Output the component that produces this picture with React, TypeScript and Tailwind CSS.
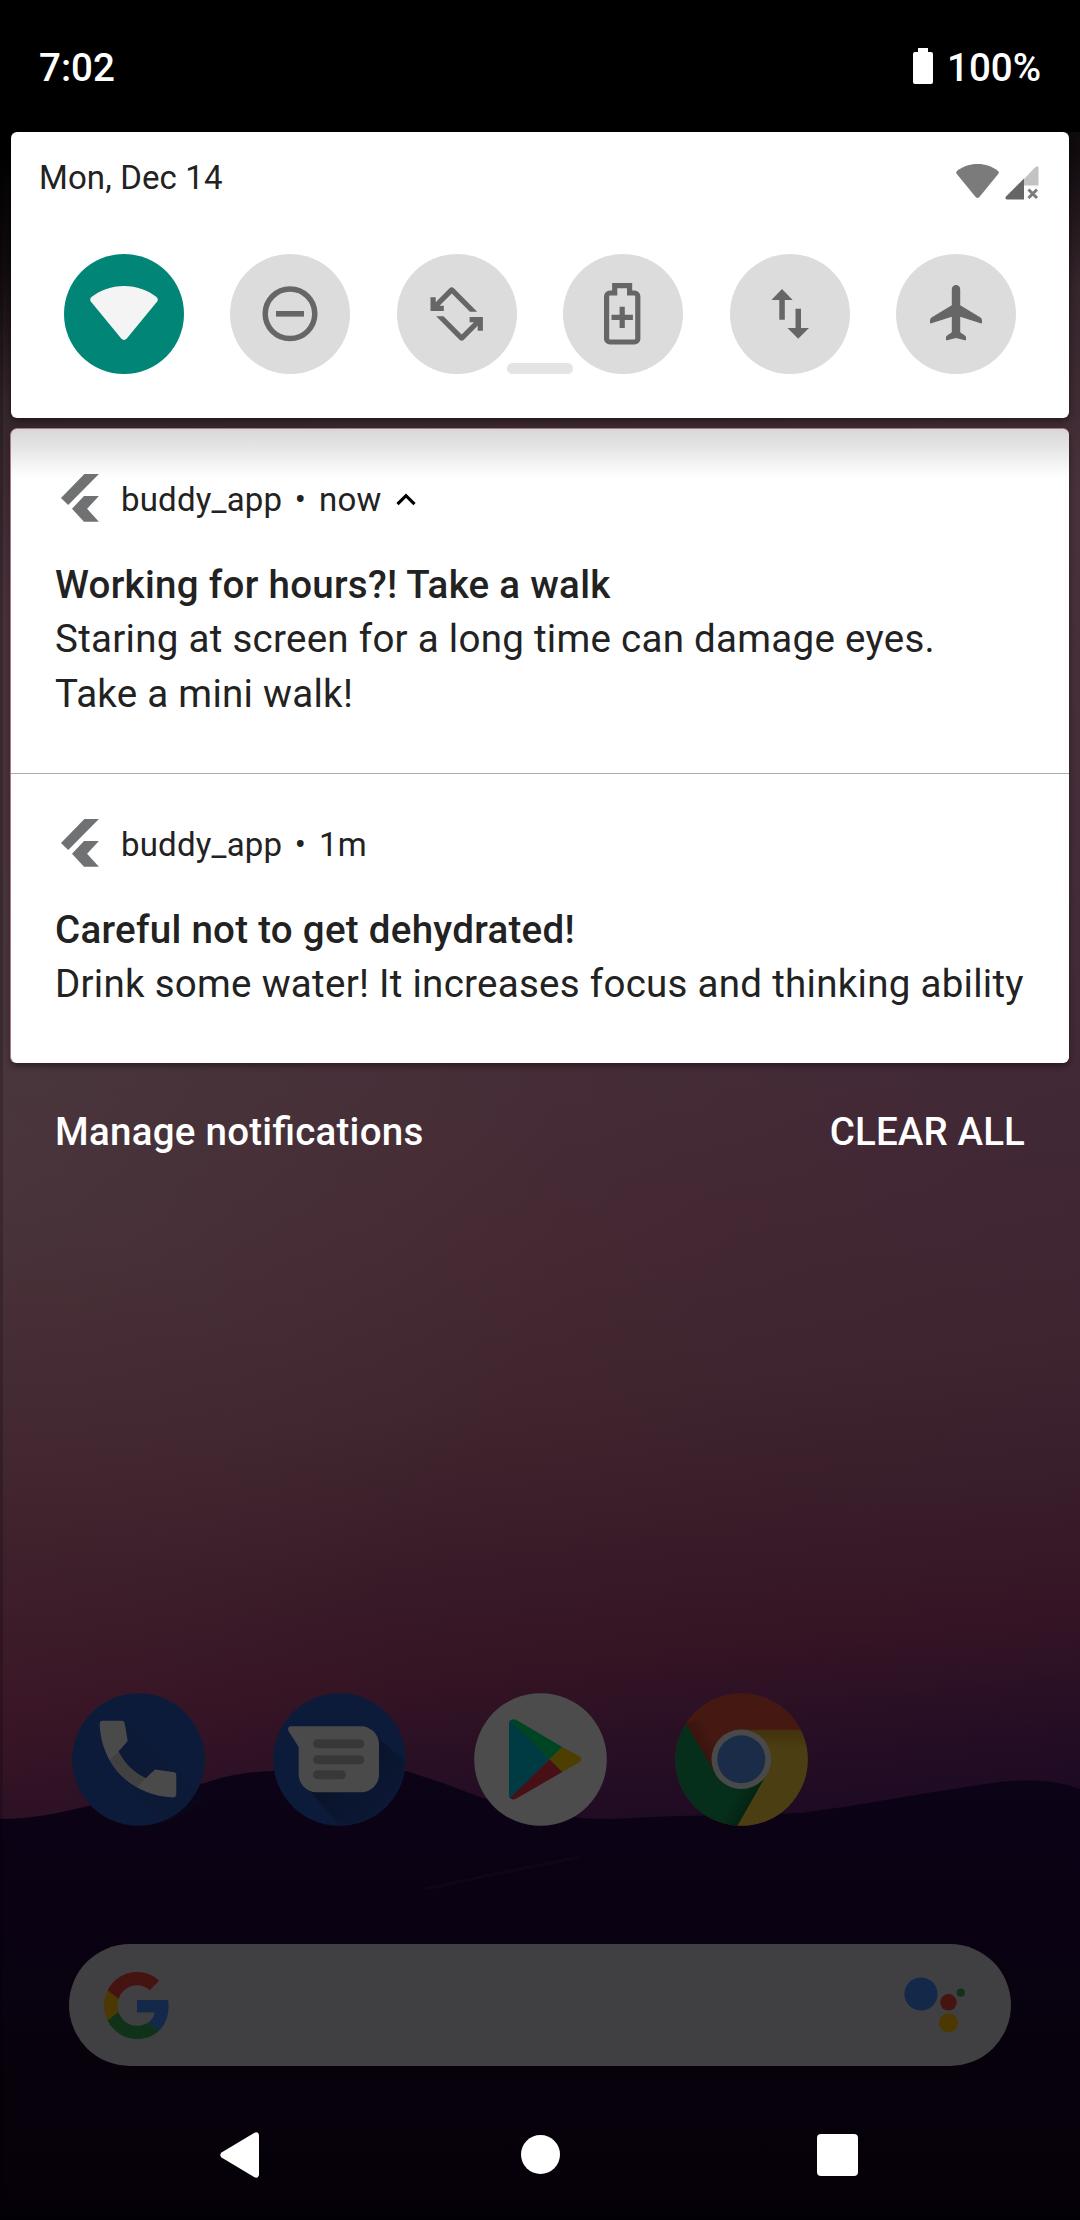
import React from "react";

type Note = { time: string; title: string; lines: string[]; expanded?: boolean };

const notes: Note[] = [
  {
    time: "now",
    title: "Working for hours?! Take a walk",
    lines: ["Staring at screen for a long time can damage eyes.", "Take a mini walk!"],
    expanded: true,
  },
  {
    time: "1m",
    title: "Careful not to get dehydrated!",
    lines: ["Drink some water! It increases focus and thinking ability"],
  },
];

function Wallpaper() {
  return (
    <svg className="absolute inset-0" width="1080" height="2220" viewBox="0 0 1080 2220" aria-hidden="true">
      <defs>
        <linearGradient id="sky" gradientUnits="userSpaceOnUse" x1="420" y1="0" x2="620" y2="1860">
          <stop offset="0.05" stopColor="#000000" />
          <stop offset="0.12" stopColor="#120c0f" />
          <stop offset="0.19" stopColor="#35262c" />
          <stop offset="0.3" stopColor="#48313a" />
          <stop offset="0.55" stopColor="#462e38" />
          <stop offset="0.66" stopColor="#452933" />
          <stop offset="0.75" stopColor="#40252e" />
          <stop offset="0.82" stopColor="#391d29" />
          <stop offset="0.89" stopColor="#351424" />
          <stop offset="0.93" stopColor="#2b1024" />
          <stop offset="0.97" stopColor="#210c24" />
          <stop offset="1" stopColor="#1b0921" />
        </linearGradient>
        <radialGradient id="warm" gradientUnits="userSpaceOnUse" cx="0" cy="1170" r="560">
          <stop offset="0" stopColor="#524c48" stopOpacity="0.27" />
          <stop offset="1" stopColor="#524c48" stopOpacity="0" />
        </radialGradient>
        <radialGradient id="ember" gradientUnits="userSpaceOnUse" cx="0" cy="1640" r="420">
          <stop offset="0" stopColor="#451a2a" stopOpacity="0.3" />
          <stop offset="1" stopColor="#451a2a" stopOpacity="0" />
        </radialGradient>
        <radialGradient id="cool" gradientUnits="userSpaceOnUse" cx="1080" cy="1130" r="600">
          <stop offset="0" stopColor="#352236" stopOpacity="0.3" />
          <stop offset="1" stopColor="#352236" stopOpacity="0" />
        </radialGradient>
        <linearGradient id="ground" x1="0" y1="0" x2="0" y2="1">
          <stop offset="0" stopColor="#0c0316" />
          <stop offset="0.35" stopColor="#0a0213" />
          <stop offset="0.7" stopColor="#07010b" />
          <stop offset="1" stopColor="#050008" />
        </linearGradient>
      </defs>
      <rect width="1080" height="2220" fill="url(#sky)" />
      <rect y="600" width="1080" height="1200" fill="url(#warm)" />
      <rect y="1200" width="1080" height="650" fill="url(#ember)" />
      <rect y="500" width="1080" height="1300" fill="url(#cool)" />
      <path
        d="M0 1819C30 1819 60 1813 88 1806C130 1796 170 1789 205 1783C225 1776 245 1772 273 1771C310 1764 370 1760 406 1771L440 1782L483 1798C530 1812 570 1819 610 1819C680 1815 740 1815 800 1813C870 1804 920 1793 1000 1782C1030 1779 1056 1780 1080 1789V2220H0Z"
        fill="url(#ground)"
      />
      <path d="M425 1889L500 1873L580 1857" stroke="#1a0f20" strokeWidth="3" opacity="0.35" fill="none" />
      <rect width="3" height="2220" fill="#000" opacity="0.2" />
      <rect y="2217" width="1080" height="3" fill="#000" opacity="0.5" />
    </svg>
  );
}

function StatusBar() {
  return (
    <header className="flex h-[132px] items-center justify-between bg-black pr-[39px] pl-[39px] text-[38.5px] leading-[54px] font-medium text-white">
      <span className="pt-[3px]">7:02</span>
      <span className="flex items-center">
        <svg width="20" height="36" viewBox="0 0 20 36" className="mr-[14px]">
          <path d="M5 0h10v4h3a2 2 0 0 1 2 2v28a2 2 0 0 1-2 2H2a2 2 0 0 1-2-2V6a2 2 0 0 1 2-2h3z" fill="#fff" />
        </svg>
        <span className="pt-[3px]">100%</span>
      </span>
    </header>
  );
}

function WifiFan({ width, height, color }: { width: number; height: number; color: string }) {
  return (
    <svg width={width} height={height} viewBox="0 0 68 54">
      <path d="M34 0C47 0 57 4 66.500 11Q68.800 13 67.200 15.500L37 52.300Q34 55.600 31 52.300L.8 15.500Q-.8 13 1.500 11C11 4 21 0 34 0Z" fill={color} />
    </svg>
  );
}

function Signal() {
  return (
    <svg width="34" height="34" viewBox="0 0 34 34">
      <path d="M19 13L30.500 1Q33.500 -1 33.500 2V19.500H19Z" fill="#c3c3c3" />
      <path d="M19 12.500V33.500H2Q-.5 33 1 30.500Z" fill="#666" />
      <path d="M23.500 23.500L32 32M32 23.500L23.500 32" stroke="#7c7c7c" strokeWidth="3" />
    </svg>
  );
}

const rotateHalf = "M34 43.300h5.200v5L53 34.300q2.200-2 4.400 0L80.700 57.700H73.400L55.300 39.400 43 51.700h4.300V57H34z";

const tileIcons: React.ReactNode[] = [
  <g key="wifi" transform="translate(26 32)">
    <path d="M34 0C47 0 57 4 66.500 11Q68.800 13 67.200 15.500L37 52.300Q34 55.600 31 52.300L.8 15.500Q-.8 13 1.500 11C11 4 21 0 34 0Z" fill="#f4f4f4" />
  </g>,
  <g key="dnd">
    <circle cx="60" cy="59.800" r="24.800" fill="none" stroke="#666" strokeWidth="5.500" />
    <rect x="46" y="57" width="28" height="5.600" fill="#666" />
  </g>,
  <g key="rotate" fill="#666" transform="translate(-0.5 0)">
    <path d={rotateHalf} />
    <path d={rotateHalf} transform="rotate(180 60.200 60)" />
  </g>,
  <g key="battery" fill="none" stroke="#666" strokeWidth="5.200">
    <path d="M51.700 31.700H66.600V39H71.500a3.300 3.300 0 0 1 3.300 3.300V84.700a3.300 3.300 0 0 1-3.300 3.300H46.900a3.300 3.300 0 0 1-3.300-3.300V42.300a3.300 3.300 0 0 1 3.300-3.300H51.700Z" />
    <path d="M59.200 52.700V74M48.500 63.300H69.900" />
  </g>,
  <g key="data" fill="#666">
    <path d="M52 35L62.700 46H54.800V65.700H49.300V46H41.400Z" />
    <path d="M68.200 84.700L57.500 74H65.500V54.700H71V74H79Z" />
  </g>,
  <path
    key="plane"
    d="M60 31a4.200 4.200 0 0 1 4.200 4.200V51.300L84.500 63.500Q86 64.500 86 66.500V68.500Q86 69.800 84.600 69.300L64.200 62.800V78.300L69.200 81.800Q70 82.500 70 83.700V85.500Q70 86.600 68.800 86.300L60 83.900 51.200 86.300Q50 86.600 50 85.500V83.700Q50 82.500 50.800 81.800L55.800 78.300V62.800L35.400 69.300Q34 69.800 34 68.500V66.500Q34 64.500 35.500 63.500L55.800 51.300V35.200A4.200 4.200 0 0 1 60 31Z"
    fill="#666"
  />,
];

function QuickSettings() {
  return (
    <section className="relative mx-[11px] flex h-[286px] flex-col rounded-[6px] bg-white shadow-[0_3px_8px_rgba(0,0,0,0.45)]">
      <div className="flex h-[92px] items-center justify-between pr-[30px] pl-[28px]">
        <span className="text-[33px] leading-[44px] tracking-[0.12px] text-[#222]">Mon, Dec 14</span>
        <span className="flex items-end gap-[6px] pt-[8px]">
          <span className="pb-[2px]">
            <WifiFan width={43} height={34} color="#7b7b7b" />
          </span>
          <Signal />
        </span>
      </div>
      <div className="flex justify-between px-[53px] pt-[30px]">
        {tileIcons.map((icon, i) => (
          <div key={i} className={i === 0 ? "size-[120px] rounded-full bg-[#018577]" : "size-[120px] rounded-full bg-[#dcdcdc]"}>
            <svg width="120" height="120" viewBox="0 0 120 120">
              {icon}
            </svg>
          </div>
        ))}
      </div>
      <div className="absolute top-[231px] left-[496px] h-[11px] w-[66px] rounded-full bg-[#e4e4e4]" />
    </section>
  );
}

function FlutterMark() {
  return (
    <svg width="38" height="48" viewBox="0 0 38 48" fill="#6f7173">
      <path d="M23.400 0H37.900L7.200 31 0 24Z" />
      <path d="M23 22H37.900L26.100 34.700 37.900 47.800H23L11 34.700Z" />
    </svg>
  );
}

function NoteRow({ note }: { note: Note }) {
  return (
    <article className="px-[44px] pt-[45px] text-[#222]">
      <div className="flex h-[48px] items-center pl-[6px] text-[33px] leading-[44px] tracking-[0.2px]">
        <FlutterMark />
        <span className="ml-[22px] pt-[3px]">buddy_app</span>
        <span className="mr-[13px] ml-[12.5px] pt-[3px]">•</span>
        <span className="pt-[3px]">{note.time}</span>
        {note.expanded && (
          <svg width="20" height="13" viewBox="0 0 20 13" className="mt-[2px] ml-[14px]">
            <path d="M1.500 11.200L10 2.700 18.500 11.200" fill="none" stroke="#000" strokeWidth="3.200" />
          </svg>
        )}
      </div>
      <h2 className="mt-[36px] h-[53px] text-[38.5px] leading-[54px] font-medium tracking-[0.28px] whitespace-nowrap">{note.title}</h2>
      {note.lines.map((line) => (
        <p key={line} className="text-[38.5px] leading-[55px] tracking-[0.28px] whitespace-nowrap">
          {line}
        </p>
      ))}
    </article>
  );
}

function Notifications() {
  return (
    <section className="mx-[11px] mt-[11px] h-[634px] rounded-[6px] bg-white bg-[linear-gradient(to_bottom,#d8d8d8_0px,#e6e6e6_20px,#f8f8f8_40px,#ffffff_50px)] shadow-[0_-1px_0_#b0788c,-1px_0_0_#b0788c,0_3px_6px_rgba(0,0,0,0.4)]">
      <div className="h-[345px] border-b border-[#a9abad]">
        <NoteRow note={notes[0]} />
      </div>
      <NoteRow note={notes[1]} />
    </section>
  );
}

function PhoneIcon() {
  return (
    <svg width="133" height="133" viewBox="0 0 133 133">
      <circle cx="66.500" cy="66.500" r="66.300" fill="#2b5ac4" />
      <path d="M52 29L132 105A66 66 0 0 1 88 129L37 67Z" fill="#1c3a86" opacity="0.18" />
      <path d="M31 27.700H49.500Q52.500 27.700 52.800 30.700L55.700 48 46.500 58.500C52 70 62 80 73.700 85.300L83 76.500 101 79Q104.300 79.400 104.300 82.400V101Q104.300 104.400 100.900 104.400C60 103 29 72 27.700 31Q27.700 27.700 31 27.700Z" fill="#f6f6f6" />
      <path d="M46.500 58.500C52 70 62 80 73.700 85.300L65.300 94C53 87 44 79 37.700 67Z" fill="#d9d9d9" />
    </svg>
  );
}

function MessagesIcon() {
  return (
    <svg width="133" height="133" viewBox="0 0 133 133">
      <defs>
        <linearGradient id="msgShade" x1="0.3" y1="0.3" x2="1" y2="1">
          <stop offset="0" stopColor="#142c66" stopOpacity="0.6" />
          <stop offset="1" stopColor="#142c66" stopOpacity="0.1" />
        </linearGradient>
      </defs>
      <circle cx="66.500" cy="66.500" r="66.300" fill="#2b5ac4" />
      <path d="M105 45L132 68A66 66 0 0 1 66 132L36 97Z" fill="url(#msgShade)" />
      <path d="M18 33.300H88a18 18 0 0 1 18 18V81.300a18 18 0 0 1-18 18H43.700a18 18 0 0 1-18-18V54L15.800 38.500Q13.500 34 18 33.300Z" fill="#f6f6f6" />
      <g fill="#bcbcbc">
        <rect x="40" y="46.300" width="51.300" height="9" rx="4.500" />
        <rect x="40" y="62.300" width="51.300" height="9" rx="4.500" />
        <rect x="40" y="77.300" width="33" height="9" rx="4.500" />
      </g>
    </svg>
  );
}

function PlayIcon() {
  return (
    <svg width="133" height="133" viewBox="0 0 133 133">
      <circle cx="66.500" cy="66.500" r="66.300" fill="#fff" />
      <path d="M35 30Q35 27.500 37 27L75.700 66.300 37 105.500Q35 105 35 102.500Z" fill="#00c0dd" />
      <path d="M36 27.700Q38.500 25 42.500 27L88.300 54 75.700 66.300Z" fill="#00e575" />
      <path d="M88.300 54L105.500 63.200Q109 66.300 105.500 69.300L88.300 79 75.700 66.300Z" fill="#ffd300" />
      <path d="M75.700 66.300L88.300 79 42.500 105.500Q38.500 107.500 36 105Z" fill="#ef3349" />
    </svg>
  );
}

function ChromeIcon() {
  return (
    <svg width="133" height="133" viewBox="0 0 133 133">
      <defs>
        <clipPath id="disc">
          <circle cx="66.500" cy="66.500" r="66.300" />
        </clipPath>
        <linearGradient id="yellowShade" x1="0" y1="0" x2="0" y2="1">
          <stop offset="0" stopColor="#d9a52a" />
          <stop offset="0.2" stopColor="#ffcd40" />
        </linearGradient>
        <linearGradient id="redShade" gradientUnits="userSpaceOnUse" x1="26" y1="56" x2="42" y2="47">
          <stop offset="0" stopColor="#7a2015" stopOpacity="0.35" />
          <stop offset="1" stopColor="#7a2015" stopOpacity="0" />
        </linearGradient>
        <linearGradient id="greenShade" gradientUnits="userSpaceOnUse" x1="77" y1="107" x2="62" y2="98">
          <stop offset="0" stopColor="#06492a" stopOpacity="0.45" />
          <stop offset="1" stopColor="#06492a" stopOpacity="0" />
        </linearGradient>
      </defs>
      <g clipPath="url(#disc)">
        <rect width="133" height="133" fill="#e6543d" />
        <path d="M11 30.700L60 10V81H40.500Z" fill="url(#redShade)" />
        <path d="M66.300 36.700H133V133H62L90 84Z" fill="url(#yellowShade)" />
        <path d="M0 12L11 30.700 40.500 81 66 96 90 84 62.300 133H0Z" fill="#129d57" />
        <path d="M90 84L62.300 133H45V90Z" fill="url(#greenShade)" />
      </g>
      <circle cx="66.300" cy="66.300" r="29.800" fill="#f4f4f4" />
      <circle cx="66.300" cy="66.300" r="24" fill="#5592f0" />
    </svg>
  );
}

function GoogleG() {
  return (
    <svg width="66" height="67" viewBox="0 0 48 48" preserveAspectRatio="none">
      <path fill="#EA4335" d="M24 9.500c3.540 0 6.710 1.220 9.210 3.600l6.850-6.850C35.900 2.380 30.470 0 24 0 14.620 0 6.510 5.380 2.560 13.220l7.980 6.190C12.430 13.720 17.740 9.500 24 9.500z" />
      <path fill="#4285F4" d="M46.980 24.550c0-1.570-.15-3.090-.38-4.550H24v9.020h12.940c-.58 2.960-2.260 5.480-4.780 7.180l7.730 6c4.510-4.180 7.090-10.360 7.090-17.650z" />
      <path fill="#FBBC05" d="M10.530 28.590c-.48-1.450-.76-2.990-.76-4.590s.27-3.140.76-4.590l-7.980-6.190C.92 16.460 0 20.120 0 24c0 3.880.92 7.540 2.560 10.780l7.970-6.190z" />
      <path fill="#34A853" d="M24 48c6.480 0 11.930-2.130 15.890-5.810l-7.730-6c-2.150 1.450-4.920 2.300-8.160 2.300-6.260 0-11.570-4.220-13.470-9.910l-7.980 6.190C6.510 42.620 14.620 48 24 48z" />
    </svg>
  );
}

export default function App() {
  return (
    <main className="relative isolate flex h-[2220px] w-[1080px] flex-col overflow-hidden bg-black font-['Roboto',sans-serif]">
      <Wallpaper />
      <div className="relative flex flex-1 flex-col">
        <StatusBar />
        <QuickSettings />
        <Notifications />
        <div className="mt-[42px] flex items-center justify-between px-[55px] text-[38.5px] leading-[54px] font-medium text-white">
          <span className="tracking-[0.26px] [font-feature-settings:'liga']">Manage notifications</span>
          <span className="tracking-[0.12px]">CLEAR ALL</span>
        </div>
        <div className="mt-[534px] flex gap-[68px] pl-[72px] brightness-30">
          <PhoneIcon />
          <MessagesIcon />
          <PlayIcon />
          <ChromeIcon />
        </div>
        <div className="mx-[69px] mt-[118px] flex h-[122px] items-center justify-between rounded-full bg-[#404042] pr-[45px] pl-[35px]">
          <span className="brightness-30">
            <GoogleG />
          </span>
          <svg width="62" height="60" viewBox="0 0 62 60" className="brightness-30">
            <circle cx="17" cy="19" r="16.600" fill="#4285F4" />
            <circle cx="44.500" cy="27.300" r="8.300" fill="#EA4335" />
            <circle cx="56.800" cy="17.700" r="4.100" fill="#34A853" />
            <circle cx="44.500" cy="47.800" r="9.600" fill="#FBBC05" />
          </svg>
        </div>
        <nav className="flex flex-1 items-center justify-between pt-[23px] pr-[222px] pl-[220px]">
          <svg width="39" height="46" viewBox="0 0 39 46">
            <path d="M1.500 20.500L34.500 .8Q38.500 -.8 39 3.500V42.500Q38.500 46.800 34.500 45.200L1.500 25.500Q-1 23 1.500 20.500Z" fill="#fff" />
          </svg>
          <span className="ml-[5px] size-[39px] rounded-full bg-white" />
          <span className="h-[42px] w-[41px] rounded-[4px] bg-white" />
        </nav>
      </div>
    </main>
  );
}
